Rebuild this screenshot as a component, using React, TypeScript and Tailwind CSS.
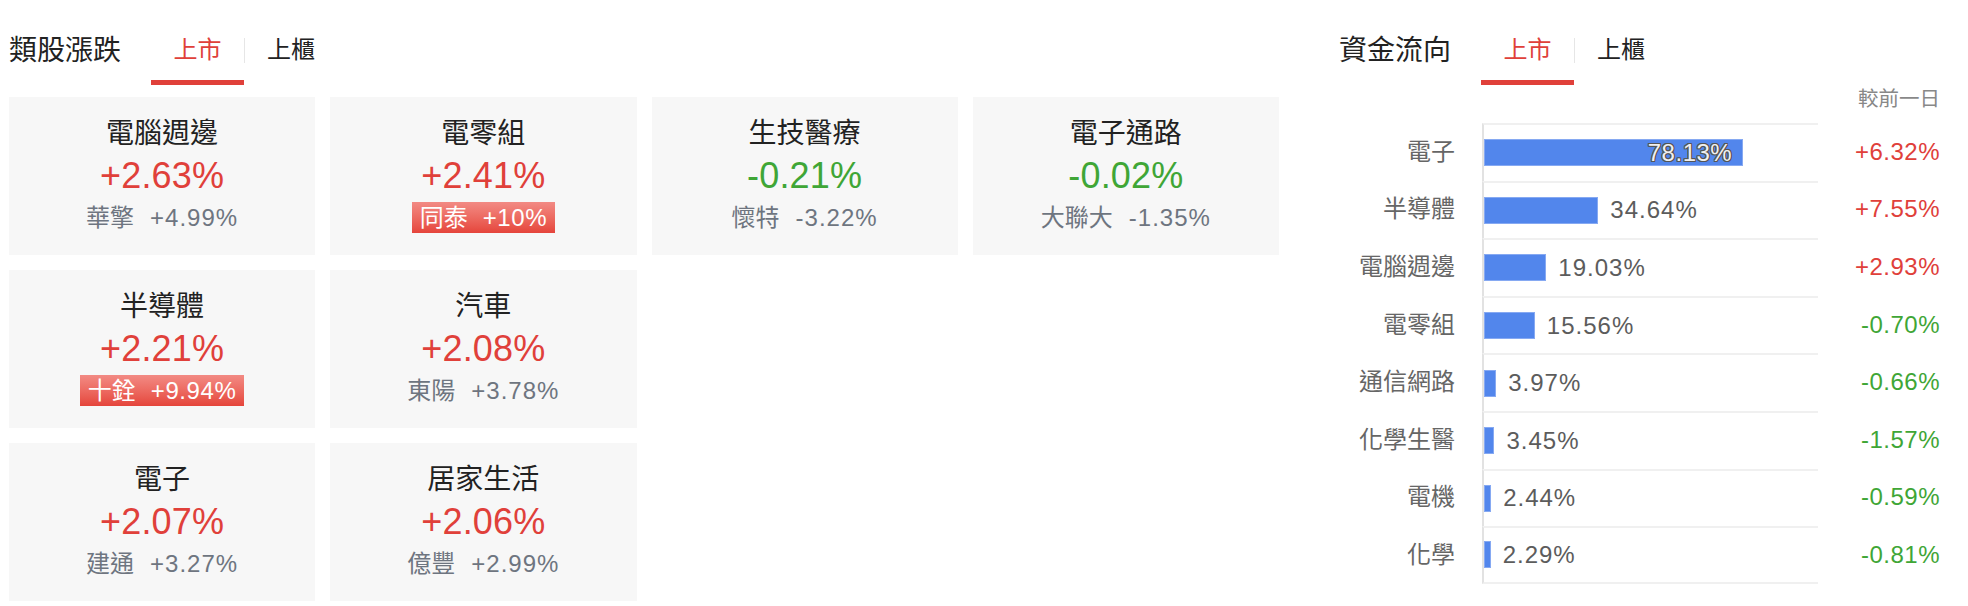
import React from "react";

type Card = {
  name: string;
  pct: string;
  up: boolean;
  stock: string;
  stockPct: string;
  badge?: boolean;
};

const rows: Card[][] = [
  [
    { name: "電腦週邊", pct: "+2.63%", up: true, stock: "華擎", stockPct: "+4.99%" },
    { name: "電零組", pct: "+2.41%", up: true, stock: "同泰", stockPct: "+10%", badge: true },
    { name: "生技醫療", pct: "-0.21%", up: false, stock: "懷特", stockPct: "-3.22%" },
    { name: "電子通路", pct: "-0.02%", up: false, stock: "大聯大", stockPct: "-1.35%" },
  ],
  [
    { name: "半導體", pct: "+2.21%", up: true, stock: "十銓", stockPct: "+9.94%", badge: true },
    { name: "汽車", pct: "+2.08%", up: true, stock: "東陽", stockPct: "+3.78%" },
  ],
  [
    { name: "電子", pct: "+2.07%", up: true, stock: "建通", stockPct: "+3.27%" },
    { name: "居家生活", pct: "+2.06%", up: true, stock: "億豐", stockPct: "+2.99%" },
  ],
];

const flows = [
  { name: "電子", pct: 78.13, chg: "+6.32%", up: true },
  { name: "半導體", pct: 34.64, chg: "+7.55%", up: true },
  { name: "電腦週邊", pct: 19.03, chg: "+2.93%", up: true },
  { name: "電零組", pct: 15.56, chg: "-0.70%", up: false },
  { name: "通信網路", pct: 3.97, chg: "-0.66%", up: false },
  { name: "化學生醫", pct: 3.45, chg: "-1.57%", up: false },
  { name: "電機", pct: 2.44, chg: "-0.59%", up: false },
  { name: "化學", pct: 2.29, chg: "-0.81%", up: false },
];

function Header({ title }: { title: string }) {
  return (
    <div className="flex h-[85px] items-start">
      <div className="pt-[33px] text-[28px] leading-[36px] text-[#222] mr-[30px]">{title}</div>
      <div className="h-[85px] pt-[35px] px-[22.5px] border-b-[5px] border-[#e0403a] text-[24px] leading-[30px] text-[#e0403a]">
        上市
      </div>
      <div className="mt-[38px] w-[1px] h-[25px] bg-[#e6e6e6]" />
      <div className="h-[85px] pt-[35px] pl-[22px] text-[24px] leading-[30px] text-[#222]">上櫃</div>
    </div>
  );
}

function SectorCard({ c }: { c: Card }) {
  const color = c.up ? "text-[#e0403a]" : "text-[#3fa636]";
  return (
    <div className="h-[158px] bg-[#f7f7f7] flex flex-col items-center pt-[19px]">
      <div className="text-[28px] leading-[36px] text-[#222]">{c.name}</div>
      <div className={`mt-[3px] text-[36px] leading-[42px] tracking-[0.2px] ${color}`}>{c.pct}</div>
      {c.badge ? (
        <div className="mt-[5px] h-[31px] px-[8px] flex items-center bg-gradient-to-b from-[#f28a84] to-[#e5443b] text-white text-[24px]">
          <span>{c.stock}</span>
          <span className="ml-[15px] tracking-[0.6px]">{c.stockPct}</span>
        </div>
      ) : (
        <div className="mt-[5px] h-[31px] flex items-center text-[#6e7580] text-[24px]">
          <span>{c.stock}</span>
          <span className="ml-[16px] tracking-[1px]">{c.stockPct}</span>
        </div>
      )}
    </div>
  );
}

export default function App() {
  return (
    <div className="w-[1968px] h-[606px] bg-white overflow-hidden flex pl-[9px] font-['Liberation_Sans','Noto_Sans_CJK_TC',sans-serif]">
      <div className="w-[1270px]">
        <Header title="類股漲跌" />
        <div className="mt-[12px] flex flex-col gap-[15px]">
          {rows.map((r, i) => (
            <div key={i} className="grid grid-cols-4 gap-[15px]">
              {r.map((c) => (
                <SectorCard key={c.name} c={c} />
              ))}
            </div>
          ))}
        </div>
      </div>

      <div className="ml-[60px] w-[604px]">
        <Header title="資金流向" />
        <div className="flex justify-end pr-[3px] text-[20.5px] leading-[28px] text-[#888]">較前一日</div>
        <div className="mt-[10px] flex flex-col">
          {flows.map((f, i) => {
            const w = Math.max(f.pct * 3.33 - 1, 5);
            const inside = f.pct > 50;
            return (
              <div key={f.name} className="flex h-[57.6px] items-stretch">
                <div className="w-[116px] flex items-center justify-end text-[24px] text-[#666]">{f.name}</div>
                <div className="w-[27px]" />
                <div
                  className={`w-[336px] border-l-2 border-l-[#e2e2e2] border-t-2 border-t-[#f0f0f0] flex items-center ${
                    i === flows.length - 1 ? "border-b-2 border-b-[#f0f0f0]" : ""
                  }`}
                >
                  <div
                    className="h-[27px] bg-[#5286ec] border border-[#86a9f2] flex items-center justify-end"
                    style={{ width: `${w}px` }}
                  >
                    {inside && (
                      <span className="pr-[10px] text-[24px] tracking-[0.5px] text-[#f0f0f0] [text-shadow:1px_0_0_#555,-1px_0_0_#555,0_1px_0_#555,0_-1px_0_#555,1px_1px_0_#555,-1px_-1px_0_#555,1px_-1px_0_#555,-1px_1px_0_#555]">
                        {f.pct.toFixed(2)}%
                      </span>
                    )}
                  </div>
                  {!inside && (
                    <span className="ml-[12px] text-[24px] tracking-[1px] text-[#5c5c5c]">{f.pct.toFixed(2)}%</span>
                  )}
                </div>
                <div
                  className={`w-[122px] flex items-center justify-end text-[24px] tracking-[0.5px] ${
                    f.up ? "text-[#e0403a]" : "text-[#3fa636]"
                  }`}
                >
                  {f.chg}
                </div>
              </div>
            );
          })}
        </div>
      </div>
    </div>
  );
}
